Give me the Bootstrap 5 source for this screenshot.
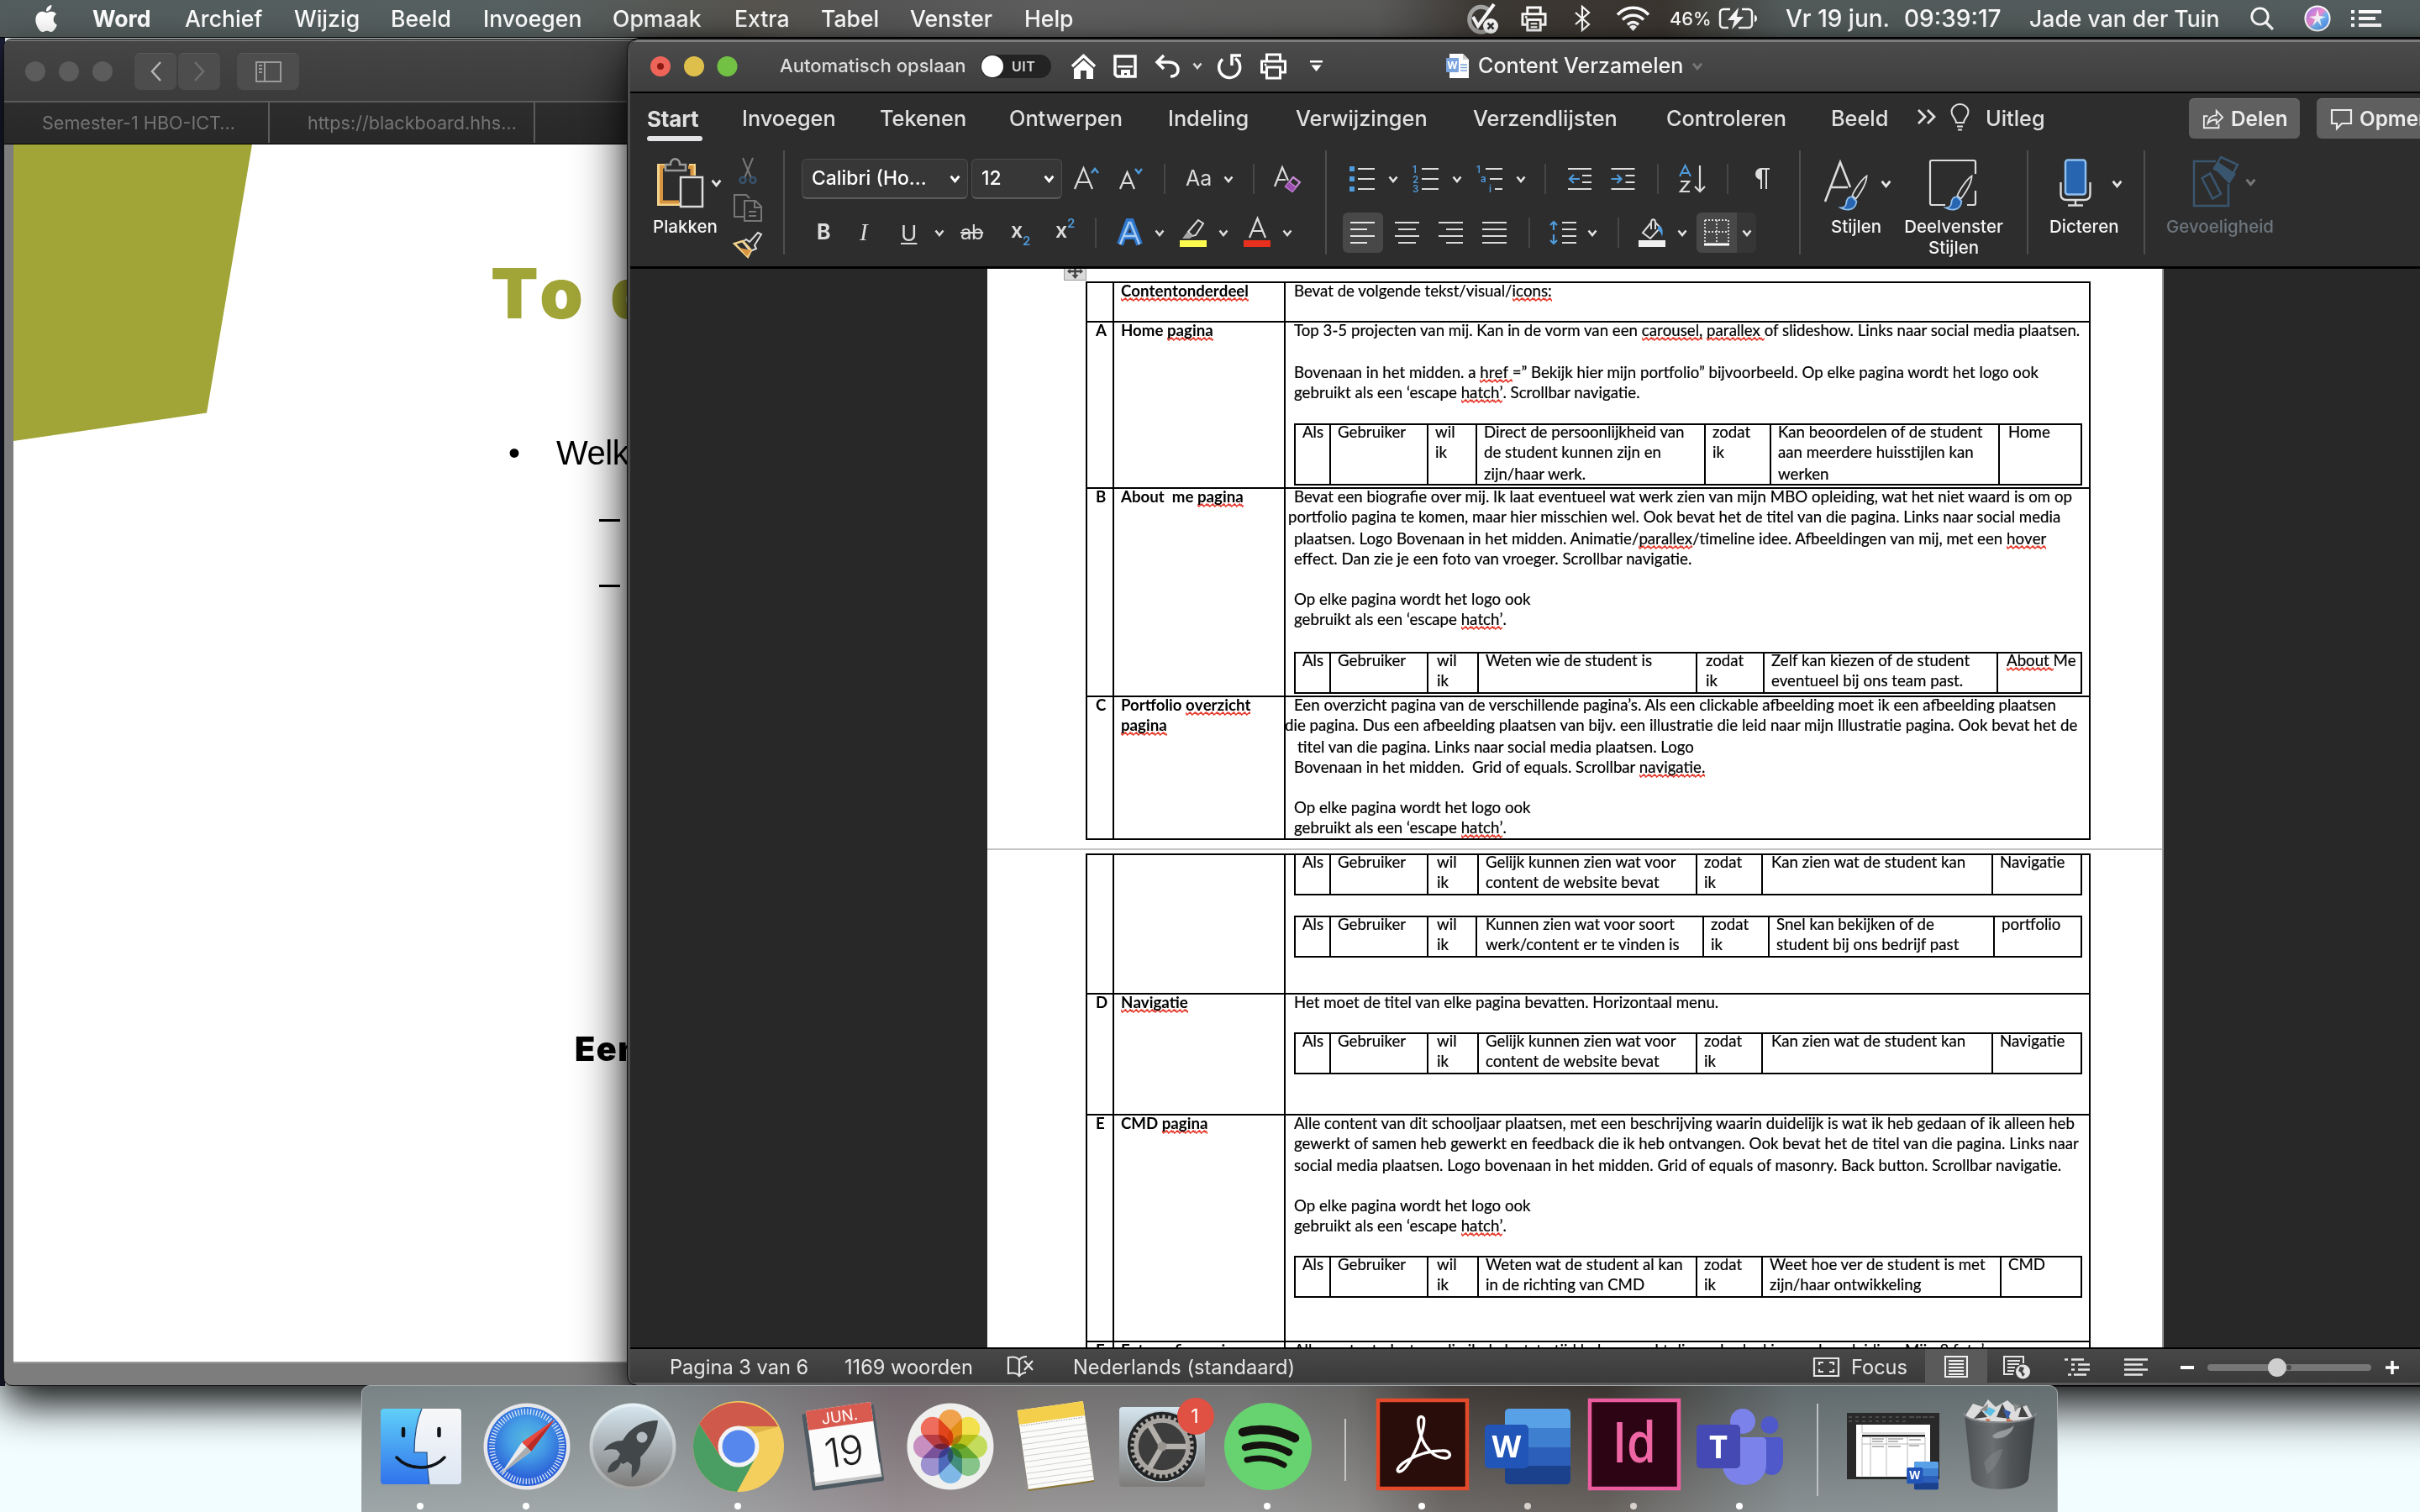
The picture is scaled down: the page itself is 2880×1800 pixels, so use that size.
<!DOCTYPE html>
<html lang="nl" data-bs-theme="dark">
<head>
<meta charset="utf-8">
<title>Content Verzamelen</title>
<link href="https://cdn.jsdelivr.net/npm/bootstrap@5.3.0/dist/css/bootstrap.min.css" rel="stylesheet">
<style>
html,body{margin:0;background:#effbfd}
body{width:2880px;height:1800px;overflow:hidden;font-family:Inter,"Liberation Sans",sans-serif;color:#e4e4e4}
svg{display:block;overflow:visible;flex:none}
.desktop{width:2880px;height:1800px;overflow:hidden;background:linear-gradient(90deg,#1b1e35 0 6px,transparent 6px) no-repeat 0 0/100% 1650px,linear-gradient(#eefafb,#f2fdff)}
.track-row{display:grid;align-items:center;justify-items:start;white-space:nowrap}

/* menu bar */
.menubar{height:45px;padding-left:42px;font-size:26.6px;font-weight:500;color:#fff;line-height:44px;border-bottom:1px solid #000;
 grid-template-columns:68px 110px 130px 115px 110px 154px 145px 103px 106px 136px 525px 66px 63px 50px 64px 58px 80px 141px 149px 263px 64px 56px auto;
 background:linear-gradient(90deg,#535c5c 0,#566060 620px,#57544f 900px,#555 1030px,#5e5e5e 1250px,#5a5a59 1640px,#3d3935 1760px,#3a352f 1980px,#525a5a 2120px,#545e5e 100%)}
.menubar .pct{font-size:21.8px}
.menubar .clock{font-size:28px}

/* browser window */
.browser{left:4px;top:46px;width:900px;height:1604px;background:#7d7d7d;border:1px solid #111;border-radius:10px;overflow:hidden;box-shadow:0 22px 50px rgba(0,0,0,.95)}
.browser-bar{height:75px;background:linear-gradient(#454545,#3b3b3b);border-top:2px solid #707070;border-bottom:2px solid #5c5c5c;padding-left:25px}
.nav-key{background:#4d4d4d;border-radius:7px;height:44px;width:50px;display:flex;align-items:center;justify-content:center;border-top:1px solid #5b5b5b}
.nav-key.wide{width:74px;margin-left:20px}
.nav-pair{margin-left:26px;gap:2px}
.browser-tabs{height:50px;background:linear-gradient(#2d2d2d,#282828);border-bottom:1px solid #000;color:#757575;font-size:21.6px}
.browser-tabs>div{border-right:2px solid #5c5c5c;width:316px;padding-left:45px;height:48px;line-height:49px;white-space:nowrap}
.slide{margin-left:11px;height:1451px;background:#fff;color:#000;width:900px;border-bottom:2px solid #9a9a9a}
.slide h1{font-weight:900;font-size:82.5px;line-height:100px;letter-spacing:8px;color:#a1a436;padding:127px 0 0 568px;margin:0;white-space:nowrap}
.slide .bullet{font:40px/50px "Liberation Sans",Arial,sans-serif;padding:115px 0 0 589px;white-space:nowrap;letter-spacing:-.5px}
.slide .bullet span:first-child{width:57px}
.slide .dash{margin:54px 0 0 697px;width:25px;height:3px;background:#000}
.slide .dash+.dash{margin-top:75px}
.slide .foot{font-weight:900;font-size:39.5px;line-height:50px;padding-left:668px;margin-top:525px;letter-spacing:1.5px;white-space:nowrap}

/* word window */
.word{left:747px;top:46px;width:2200px;height:1604px;background:#282828;border:1px solid #000;border-left:3px solid #4c4c4c;border-radius:13px;overflow:hidden;outline:1px solid #111;box-shadow:0 25px 60px rgba(0,0,0,.95),0 0 14px rgba(0,0,0,.3)}
.titlebar{height:62px;border-top:3px solid #7c7c7c;background:linear-gradient(#4b4b4b,#3e3e3e);padding:0 0 2px 24px;
 grid-template-columns:154px 239px 107px 51px 49px 45px 29px 51px 60px 162px 38px 254px auto}
.autosave{font-size:22.1px;font-weight:500;color:#dcdcdc}
.toggle{width:84px;height:28px;border-radius:14px;background:#232323;font-size:16px;font-weight:600;color:#d9d9d9;padding-left:37px;line-height:28px;letter-spacing:.5px}
.toggle i{left:1px;top:1px;width:26px;height:26px;border-radius:50%;background:#fff}
.doc-title{font-size:25.1px;font-weight:500;color:#f3f3f3}
.ribbon{height:211px;background:#2d2d2d;border-top:2px solid #000;border-bottom:3px solid #000}
.ribbon-tabs{height:61px;padding:0 0 1px 20px;font-size:25.3px;font-weight:500;color:#e0e0e0;
 grid-template-columns:113px 164px 154px 189px 152px 211px 230px 196px 102px 40px 42px 242px 152px auto}
.ribbon-tabs .tab-on{font-weight:700;position:relative;font-size:26px;letter-spacing:-.2px}
.ribbon-tabs .tab-on::after{content:"";position:absolute;left:0;width:66px;height:6px;bottom:-7px;border-radius:3px;background:#e4e4e6}
.pill{width:132px;background:#5f5f5f;border-radius:6px;height:48px;font-size:24.3px;font-weight:600;padding-left:16px;border-top:1px solid #777;color:#ececec}
.pill.wide{width:250px}
.panel-row{height:148px;padding-top:7px}
.vr-long{width:2px;height:124px;background:#4e4e4e;flex:none}
.vr-s{width:2px;height:36px;background:#474747}
.lbl{font-size:20.5px;font-weight:500;color:#f4f4f4;line-height:25px;white-space:nowrap;text-align:center;margin-top:8px}
.paste{width:98px;flex:none;padding:9px 0 0 32px}
.paste .lbl{margin:9px 0 0 -5px;text-align:left}
.clip{width:64px;flex:none;padding:9px 20px 0 0;gap:12px;margin-left:20px}
.styles-set{width:112px;flex:none;padding:10px 0 0 27px}
.styles-set .lbl{margin-left:9px;text-align:left}
.pane-set{width:140px;flex:none;padding-top:10px;margin-right:17px}
.dictate-set{width:137px;flex:none;padding:10px 0 0 25px}
.sense-set{padding:6px 0 0 25px}
.font-set{width:643px;flex:none;padding:10px 0 0 20px}
.para-set{width:562px;flex:none;padding:10px 0 0 19px}
.r1,.r2{height:48px}.r2{margin-top:16px}
.font-set .r1{grid-template-columns:202px 122px 54px 53px 26px 45px 35px 25px auto}
.font-set .r2{padding-left:18px;font-size:26px;color:#dcdcdc;grid-template-columns:51px 49px 40px 31px 60px 53px 47px 26px 45px 30px 46px 30px 46px auto}
.font-set .r2 b{font-size:25px}
.font-set .r2 i{font-family:"Liberation Serif",serif;font-size:29px}
.font-set .r2 s{font-size:24px;letter-spacing:-.5px}
.aa{font-size:25px;color:#dcdcdc}
.para-set .r1{padding-left:8px;grid-template-columns:46px 29px 47px 29px 47px 34px 28px 51px 55px 26px 57px 31px auto}
.para-set .r2{grid-template-columns:62px 52px 52px 55px 25px 45px 36px 25px 46px 23px auto}
.combo{width:198px;height:48px;background:#373737;border:1px solid #4c4c4c;border-bottom:2px solid #5c5c5c;border-radius:6px;font-size:22.9px;font-weight:500;color:#fff;padding:0 8px 0 11px}
.combo.short{width:108px}
.key-on{height:48px;width:48px;background:#484848;border-radius:6px;display:flex;align-items:center;padding-left:9px}
.key-on.split{width:71px;gap:15px;background:linear-gradient(90deg,#484848 48px,#363636 48px)}
.workspace{height:1284px}

/* document */
.sheet-wrap{width:1400px;margin-left:425px;height:1284px;background:#fff;color:#000;font:18.68px/24px Lato,Carlito,sans-serif;overflow:hidden;border-right:2px solid #999}
.sheet-a{height:692px;padding:15px 0 0 117px;border-bottom:2px solid #c4c4c4}
.sheet-b{padding:4px 0 0 117px}
.trow{display:flex;width:1196px;border-top:2px solid #000}
.grid-a,.grid-b{width:1196px}
.grid-a{border-bottom:2px solid #000}
.c1,.c2,.c3{border-left:2px solid #000;overflow:hidden;white-space:nowrap;height:100%}
.c1{width:32px;padding-left:10px;font-weight:700}
.c2{width:204px;padding-left:8px;font-weight:700}
.c3{width:960px;padding-left:10px;border-right:2px solid #000;-webkit-text-stroke:.2px #000}
.c3.open{overflow:visible}
.lines{margin:-3px 0 1px;white-space:pre}
.lines div{height:24px}
.lines .tall{height:26px}
.h0{height:47px}.h1r{height:198px}.h2r{height:248px}.h3r{height:170px}.h4r{height:166px}.h5r{height:144px}.h6r{height:270px}.h7r{height:60px}
.story{display:grid;width:938px;border:2px solid #000;border-left:0;height:50px}
.story.gap-up{margin-top:24px}
.story.tuck{margin-top:-2px}
.story.tall3{height:74px}
.story>div{border-left:2px solid #000;padding-left:8px;height:100%}
.story .lines{margin-top:-4px}
.story .in2{padding-left:10px}
.s-a{grid-template-columns:42px 116px 58px 272px 78px 272px 98px}
.s-b{grid-template-columns:42px 116px 60px 260px 80px 278px 100px}
.s-c{grid-template-columns:42px 116px 60px 260px 78px 274px 106px}
.s-d{grid-template-columns:42px 116px 58px 270px 78px 268px 104px}
.s-e{grid-template-columns:42px 116px 60px 260px 78px 284px 96px}
.sq{font-kerning:none;padding-bottom:2px;background:url("data:image/svg+xml,%3Csvg xmlns='http://www.w3.org/2000/svg' width='6.5' height='5' viewBox='0 0 6.5 5'%3E%3Cpath d='M-1 .2L1.6 4 4.9 1 7.5 4.4' fill='none' stroke='%23e53a2c' stroke-width='1.5'/%3E%3C/svg%3E") repeat-x left bottom}
.grip{left:516px;top:0;width:27px;height:14px;background:#d9d9d9;border:1px solid #999;border-top:0}
.nudge-l{margin-left:-7px}.nudge-ll{margin-left:-11px}.nudge-r{margin-left:4px}

/* status bar */
.statusbar{height:45px;border-top:2px solid #000;border-bottom:3px solid #5a5a5a;background:linear-gradient(#484848,#3a3a3a);padding-left:47px;font-size:23.6px;color:#e6e6e6;
 grid-template-columns:208px 194px 78px 881px 45px 88px 93px 73px 71px 67px 32px 212px auto}
.view-on{width:74px;height:43px;background:#5a5a5a;padding:8px 0 0 23px}
.zoomer{width:195px;height:8px;border-radius:4px;background:#777;position:relative}
.zoomer::after{content:"";position:absolute;left:72px;top:-7px;width:22px;height:22px;border-radius:50%;background:#cfcfcf}
.zoomer::before{content:"";position:absolute;left:94px;top:1px;width:6px;height:6px;border-radius:50%;background:#4a4a4a}

/* dock */
.dock{left:430px;top:1649px;width:2019px;height:165px;border:1px solid #a6adae;border-radius:10px 10px 0 0;padding:1px 0 0 7px;
 background:linear-gradient(rgba(0,0,0,.08),rgba(255,255,255,.24)),linear-gradient(90deg,#838e90 0,#899294 330px,#7d777b 570px,#7b6f74 640px,#7b7878 800px,#7a7a7a 1050px,#6f6e6d 1180px,#45403d 1290px,#3f3934 1480px,#50504e 1560px,#687275 1700px,#6d7779 100%)}
.slot{width:126px;height:150px}
.slot-rule{width:58px;height:150px}
</style>
<script src="https://cdn.jsdelivr.net/npm/bootstrap@5.3.0/dist/js/bootstrap.bundle.min.js"></script>
</head>
<body>
<svg width="0" height="0" class="position-absolute">
 <defs>
  <symbol id="chev" viewBox="0 0 12 9"><path d="M1.5 1.5L6 7l4.500-5.500" fill="none" stroke="currentColor" stroke-width="2.600"/></symbol>
  <symbol id="printer" viewBox="0 0 32 32"><g fill="none" stroke="currentColor" stroke-width="3"><path d="M8 10V2h16v8M7 23H2V10h28v13h-5"/><path d="M8 17h16v13H8z"/></g><circle cx="6.500" cy="14" r="1.500" fill="currentColor"/></symbol>
  <symbol id="brush" viewBox="0 0 46 60"><path d="M44 2c-8 5-21 24-24 33l6 5C32 32 44 14 44 2z" fill="#2d2d2d" stroke="#dcdcdc" stroke-width="2.500"/><path d="M20 37c-7-1-10 5-10 11-1 5-5 7-9 7 9 5 25 5 26-11z" fill="#2765b1" stroke="#8fc0ef" stroke-width="2.500"/></symbol>
  <symbol id="wordlogo" viewBox="0 0 102 92"><rect x="24" width="78" height="90" rx="5" fill="#2b5fba"/><path d="M24 23V5a5 5 0 0 1 5-5h68a5 5 0 0 1 5 5v18z" fill="#59a1e6"/><path d="M24 23h78v23H24z" fill="#3f7fd0"/><path d="M24 68h78v17a5 5 0 0 1-5 5H29a5 5 0 0 1-5-5z" fill="#1b418d"/><rect y="19" width="52" height="52" rx="5" fill="#2255b8"/><text x="26" y="58" font-family="Open Sans,sans-serif" font-weight="700" font-size="36" text-anchor="middle" fill="#fff">W</text></symbol>
  <linearGradient id="gFind" x2="0" y2="1"><stop stop-color="#5fcff8"/><stop offset="1" stop-color="#3173ec"/></linearGradient>
  <linearGradient id="gLite" x2="0" y2="1"><stop stop-color="#f7f7f9"/><stop offset="1" stop-color="#dde7f3"/></linearGradient>
  <radialGradient id="gSaf" cy=".4"><stop stop-color="#55b8dc"/><stop offset=".45" stop-color="#469fe6"/><stop offset="1" stop-color="#2b62d8"/></radialGradient>
  <linearGradient id="gRock" x2="0" y2="1"><stop stop-color="#d5e5ee"/><stop offset=".6" stop-color="#9fa5a8"/><stop offset="1" stop-color="#7d7b79"/></linearGradient>
  <linearGradient id="gRim" x2="0" y2="1"><stop stop-color="#e6f2f7"/><stop offset="1" stop-color="#a3a3a2"/></linearGradient>
  <linearGradient id="gTrash" x2="1" y2="0"><stop stop-color="#4c4f52"/><stop offset=".4" stop-color="#6c6f72"/><stop offset=".65" stop-color="#505356"/><stop offset="1" stop-color="#3c3f42"/></linearGradient>
  <linearGradient id="gSiri" x2="1" y2="1"><stop stop-color="#8d7cf0"/><stop offset=".45" stop-color="#f28ad0"/><stop offset=".6" stop-color="#6fb7f5"/><stop offset="1" stop-color="#4b7de8"/></linearGradient>
 </defs>
</svg>

<div class="desktop position-relative">

 <nav class="menubar track-row">
  <svg width="26" height="32" viewBox="1.300 0 13.300 16" preserveAspectRatio="none" fill="#fff"><path d="M11.182.008C11.148-.03 9.923.023 8.857 1.180c-1.066 1.156-.902 2.482-.878 2.516s1.520.087 2.475-1.258.762-2.391.728-2.430m3.314 11.733c-.048-.096-2.325-1.234-2.113-3.422s1.675-2.789 1.698-2.854-.597-.79-1.254-1.157a3.700 3.700 0 0 0-1.563-.434c-.108-.003-.483-.095-1.254.116-.508.139-1.653.589-1.968.607-.316.018-1.256-.522-2.267-.665-.647-.125-1.333.131-1.824.328-.49.196-1.422.754-2.074 2.237-.652 1.482-.311 3.830-.067 4.560s.625 1.924 1.273 2.796c.576.984 1.340 1.667 1.659 1.899s1.219.386 1.843.067c.502-.308 1.408-.485 1.766-.472.357.013 1.061.154 1.782.539.571.197 1.111.115 1.652-.105.541-.221 1.324-1.059 2.238-2.758q.52-1.185.473-1.282"/></svg>
  <span class="fw-bold">Word</span><span>Archief</span><span>Wijzig</span><span>Beeld</span><span>Invoegen</span><span>Opmaak</span><span>Extra</span><span>Tabel</span><span>Venster</span><span>Help</span>
  <svg width="40" height="38" viewBox="0 0 40 38"><path d="M28 9a14 15 0 1 0 2 20" fill="none" stroke="#a5a5a3" stroke-width="5"/><path d="M9 17l6 11L34 2" fill="none" stroke="#fff" stroke-width="4"/><circle cx="30" cy="28" r="9" fill="#fff"/><path d="M26.500 24.500l7 7m0-7l-7 7" stroke="#333" stroke-width="2.500"/></svg>
  <svg width="31" height="31" viewBox="0 0 32 32" color="#fff"><use href="#printer"/><path d="M12 22h8M12 26h8" stroke="#fff" stroke-width="2"/></svg>
  <svg width="20" height="32" viewBox="0 0 20 32"><path d="M2 9l16 14-8 7V2l8 7L2 23" fill="none" stroke="#fff" stroke-width="2.200"/></svg>
  <svg width="41" height="30" viewBox="0 0 41 30"><g fill="none" stroke="#fff" stroke-width="3.500"><path d="M2 10.500C12-.5 29-.5 39 10.500"/><path d="M8 16.500c7-7 18-7 25 0"/><path d="M14 22.500c4-4 9-4 13 0"/></g><path d="M16 25c3-3 6-3 9 0l-4.500 5z" fill="#fff"/></svg>
  <span class="pct">46%</span>
  <svg width="47" height="26" viewBox="0 0 47 26"><path d="M14 2H6a4 4 0 0 0-4 4v14a4 4 0 0 0 4 4h6M28 2h8a4 4 0 0 1 4 4v14a4 4 0 0 1-4 4H24" fill="none" stroke="#fff" stroke-width="2.500"/><path d="M24 0L11 15h8l-3 11 14-15h-8z" fill="#fff"/><path d="M43 9c4 0 4 8 0 8z" fill="#fff"/></svg>
  <span class="clock">Vr 19 jun.</span><span class="clock">09:39:17</span><span>Jade van der Tuin</span>
  <svg width="29" height="29" viewBox="0 0 29 29"><circle cx="11.500" cy="11.500" r="9.700" fill="none" stroke="#fff" stroke-width="2.800"/><path d="M18.500 18.500L27 27" stroke="#fff" stroke-width="3.200"/></svg>
  <svg width="32" height="32" viewBox="0 0 32 32"><circle cx="16" cy="16" r="14.600" fill="url(#gSiri)" stroke="#fff" stroke-width="2"/><path d="M16 5l2 8 8 1-7 3 2 9-5-7-6 6 3-8-7-3 8-1z" fill="#fff" opacity=".9"/></svg>
  <svg width="36" height="20" viewBox="0 0 36 20" fill="#fff"><path d="M0 0h4v4H0zM9 0h27v4H9zM0 8h4v4H0zM9 8h20v4H9zM0 16h4v4H0zM9 16h27v4H9z"/></svg>
 </nav>

 <section class="browser position-absolute">
  <div class="browser-bar d-flex align-items-center">
   <svg width="104" height="24" viewBox="0 0 104 24" fill="#5c5c5c"><circle cx="12" cy="12" r="12"/><circle cx="52" cy="12" r="12"/><circle cx="92" cy="12" r="12"/></svg>
   <div class="nav-pair d-flex"><div class="nav-key"><svg width="13" height="24"><path d="M12 1L2 12l10 11" fill="none" stroke="#b5b5b5" stroke-width="2.500"/></svg></div><div class="nav-key"><svg width="13" height="24"><path d="M1 1l10 11L1 23" fill="none" stroke="#6e6e6e" stroke-width="2.500"/></svg></div></div>
   <div class="nav-key wide"><svg width="31" height="25"><path d="M1 1h29v23H1zM11 1v23M4 5h4M4 9h4M4 13h4" fill="none" stroke="#9a9a9a" stroke-width="2"/></svg></div>
  </div>
  <div class="browser-tabs d-flex"><div>Semester-1 HBO-ICT…</div><div>https://blackboard.hhs…</div></div>
  <div class="slide position-relative">
   <svg class="position-absolute top-0 start-0" width="300" height="354"><path d="M0 0h284l-54 319.500L0 353z" fill="#a1a436"/></svg>
   <h1>To do</h1>
   <div class="bullet d-flex"><span>•</span><span>Welkom</span></div>
   <div class="dash"></div>
   <div class="dash"></div>
   <div class="foot">Een</div>
  </div>
 </section>

 <section class="word position-absolute">
  <header class="titlebar track-row">
   <svg width="104" height="24" viewBox="0 0 104 24"><circle cx="12" cy="12" r="12" fill="#ee6459"/><circle cx="12" cy="12" r="4" fill="#8c1a10"/><circle cx="52" cy="12" r="12" fill="#dfbf4c"/><circle cx="91.500" cy="12" r="12" fill="#72c144"/></svg>
   <span class="autosave">Automatisch opslaan</span>
   <div class="toggle position-relative"><i class="position-absolute"></i>UIT</div>
   <svg width="31" height="30" viewBox="0 0 31 30"><path d="M2 15L15.500 2.500 29 15" fill="none" stroke="#fff" stroke-width="3.500"/><path d="M4 18L15.500 7.500 27 18v12h-8V20h-7v10H4z" fill="#fff"/></svg>
   <svg width="28" height="28" viewBox="0 0 28 28"><path d="M2 2h24v24H4.500L2 23.500z" fill="none" stroke="#fff" stroke-width="3.500"/><path d="M5 13h18v2.500H5zM9 18h11v8h-4v-4h-3v4H9z" fill="#fff"/></svg>
   <svg width="31" height="28" viewBox="0 0 31 28"><path d="M11 1L3 9l8 8M3 9h14c7 0 11 4 11 9s-4 8-9 8" fill="none" stroke="#fff" stroke-width="3.500"/></svg>
   <svg width="12" height="9" color="#ddd"><use href="#chev"/></svg>
   <svg width="30" height="31" viewBox="0 0 30 31"><path d="M7 7.500A12.500 12.500 0 1 0 22 6.500M18 15V3h11" fill="none" stroke="#fff" stroke-width="3.500"/></svg>
   <svg width="33" height="32" viewBox="0 0 32 32" color="#fff"><use href="#printer"/></svg>
   <svg width="15" height="14"><path d="M0 0h15v2.500H0zM1.500 5.500h12L7.500 13z" fill="#fff"/></svg>
   <svg width="27" height="29" viewBox="0 0 27 29"><path d="M4 0h16l7 7v22H4z" fill="#fff"/><path d="M20 0l7 7h-7z" fill="#ccc"/><rect y="5" width="15" height="17" rx="1" fill="#7aa3dd"/><path d="M17 13h8M17 16.500h8M17 20h8" stroke="#7aa3dd" stroke-width="1.500"/><text x="7.500" y="18" font-size="12" font-weight="700" fill="#fff" text-anchor="middle">W</text></svg>
   <span class="doc-title">Content Verzamelen</span>
   <svg width="14" height="10" color="#777"><use href="#chev"/></svg>
  </header>

  <div class="ribbon">
   <div class="ribbon-tabs track-row">
    <span class="tab-on">Start</span><span>Invoegen</span><span>Tekenen</span><span>Ontwerpen</span><span>Indeling</span><span>Verwijzingen</span><span>Verzendlijsten</span><span>Controleren</span><span>Beeld</span>
    <svg width="24" height="18" class="mb-1"><path d="M2 1l8 8-8 8M13 1l8 8-8 8" fill="none" stroke="#e0e0e0" stroke-width="2.800"/></svg>
    <svg width="23" height="33" class="mb-1" viewBox="0 0 23 33"><path d="M7 23c0-5-5.500-7-5.500-13a10 9 0 0 1 20 0c0 6-5.500 8-5.500 13zM8 27.500h7M9 31.500h5" fill="none" stroke="#e0e0e0" stroke-width="2"/></svg>
    <span>Uitleg</span>
    <div class="pill d-flex align-items-center"><svg class="me-2" width="26" height="26" viewBox="0 0 28 26"><path d="M7 9H2v15h19v-5" fill="none" stroke="#ececec" stroke-width="2"/><path d="M7 18c1-7 5-10 11-10V2l8 8.500-8 8v-5c-5 0-8 1-11 4.500z" fill="none" stroke="#ececec" stroke-width="2"/></svg>Delen</div>
    <div class="pill wide d-flex align-items-center"><svg class="me-2" width="27" height="25" viewBox="0 0 27 25"><path d="M2 2h23v16H14l-6 6v-6H2z" fill="none" stroke="#ececec" stroke-width="2.200"/></svg>Opmerkingen</div>
   </div>
   <div class="panel-row d-flex">
    <div class="paste">
     <div class="d-flex align-items-center"><svg width="56" height="60" viewBox="0 0 56 60"><path d="M9 9H2v46h26M38 9h6v12" fill="none" stroke="#f3d28b" stroke-width="4"/><path d="M12 10.500H5v42h21M37 11h4.500v10" fill="none" stroke="#d9943f" stroke-width="4"/><path d="M10 15V8h6c0-9 11-9 11 0h7v7z" fill="#2d2d2d" stroke="#9a9a9a" stroke-width="2.500"/><path d="M28 23h26v35H28z" fill="#2d2d2d" stroke="#dcdcdc" stroke-width="2.500"/></svg><svg class="ms-2" width="13" height="10"><use href="#chev"/></svg></div>
     <div class="lbl">Plakken</div>
    </div>
    <div class="clip d-flex flex-column align-items-center">
     <svg width="22" height="31" viewBox="0 0 22 31"><path d="M5 0l10 24M17 0L7 24" stroke="#777" stroke-width="2"/><g fill="none" stroke="#37536e" stroke-width="2.500"><circle cx="5" cy="26.500" r="3.500"/><circle cx="17" cy="26.500" r="3.500"/></g></svg>
     <svg width="34" height="33" viewBox="0 0 34 33"><path d="M12 27H1V1h14l4 4M13 8h13l7 7v17H13zM25 8v8h8M18 21h9M18 26h9" fill="none" stroke="#777" stroke-width="2"/></svg>
     <svg width="34" height="31" viewBox="0 0 34 31"><path d="M15 9l4 3L29 1l4 2-8 13 2 4-7 3-9-11z" fill="none" stroke="#dcdcdc" stroke-width="2"/><path d="M11 11L1 14l16 16 4-8z" fill="none" stroke="#f3d28b" stroke-width="2.500"/><path d="M7 19l14 3-5 7z" fill="#d9943f"/></svg>
    </div>
    <div class="vr-long"></div>
    <div class="font-set">
     <div class="r1 track-row">
      <div class="combo d-flex align-items-center justify-content-between"><span>Calibri (Ho...</span><svg width="13" height="10"><use href="#chev"/></svg></div>
      <div class="combo short d-flex align-items-center justify-content-between"><span>12</span><svg width="13" height="10"><use href="#chev"/></svg></div>
      <svg width="30" height="30" viewBox="0 0 30 30"><path d="M1 27L11.500 2 22 27M5 19h13" fill="none" stroke="#dcdcdc" stroke-width="2.200"/><path d="M21 8l4-5 4 5" fill="none" stroke="#4f9bdc" stroke-width="2.500"/></svg>
      <svg width="30" height="30" viewBox="0 0 30 30"><path d="M1 27L9.500 7 18 27M4 20h11" fill="none" stroke="#dcdcdc" stroke-width="2.200"/><path d="M19 3l4 5 4-5" fill="none" stroke="#4f9bdc" stroke-width="2.500"/></svg>
      <div class="vr-s"></div>
      <span class="aa">Aa</span>
      <svg width="12" height="9"><use href="#chev"/></svg>
      <div class="vr-s"></div>
      <svg width="32" height="34" viewBox="0 0 32 34"><path d="M1 26L10 3l7 16M5 18h9" fill="none" stroke="#dcdcdc" stroke-width="2.200"/><path d="M23 15l8 6-9 11-8-6zM18 21l8 6" fill="none" stroke="#c58ad6" stroke-width="2.200"/><path d="M18 21l8 6-4 5-8-6z" fill="#9b4fb0"/></svg>
     </div>
     <div class="r2 track-row">
      <b>B</b><i>I</i>
      <span class="text-decoration-underline">U</span><svg width="12" height="9"><use href="#chev"/></svg>
      <s>ab</s>
      <svg width="24" height="34"><text y="23" font-size="25" font-weight="600" fill="#dcdcdc">x</text><text x="14" y="32" font-size="15" font-weight="600" fill="#4f9bdc">2</text></svg>
      <svg width="24" height="34"><text y="23" font-size="25" font-weight="600" fill="#dcdcdc">x</text><text x="14" y="11" font-size="15" font-weight="600" fill="#4f9bdc">2</text></svg>
      <div class="vr-s"></div>
      <svg width="31" height="32" viewBox="0 0 31 32"><path d="M4 30L14 3h3l10 27M9 20h13" fill="none" stroke="#2f78cf" stroke-width="8"/><path d="M4 30L14.500 4h2L27 30M9 20h13" fill="none" stroke="#a9cdf2" stroke-width="2.400"/></svg>
      <svg width="12" height="9"><use href="#chev"/></svg>
      <svg width="32" height="34" viewBox="0 0 32 34"><path d="M10 16L22 2l6 4-9 14-4 1z" fill="none" stroke="#dcdcdc" stroke-width="2"/><path d="M9 16l7 5-4 3H3z" fill="#a5a5a5"/><path d="M0 26h32v8H0z" fill="#fdfc4e"/></svg>
      <svg width="12" height="9"><use href="#chev"/></svg>
      <svg width="32" height="34" viewBox="0 0 32 34"><path d="M7 23L16.500 0 26 23M11 15h11" fill="none" stroke="#dcdcdc" stroke-width="2.200"/><path d="M0 26h32v8H0z" fill="#e8301f"/></svg>
      <svg width="12" height="9"><use href="#chev"/></svg>
     </div>
    </div>
    <div class="vr-long"></div>
    <div class="para-set">
     <div class="r1 track-row">
      <svg width="30" height="30" viewBox="0 0 30 30"><path d="M0 0h6v6H0zM0 12h6v6H0zM0 24h6v6H0z" fill="#4f9bdc"/><path d="M10 3h20M10 15h20M10 27h20" stroke="#dcdcdc" stroke-width="2.200"/></svg><svg width="12" height="9"><use href="#chev"/></svg>
      <svg width="31" height="32" viewBox="0 0 31 32"><g fill="#4f9bdc" font-size="11.500" font-weight="600"><text y="8.500">1</text><text y="20.500">2</text><text y="32">3</text></g><path d="M11 4h20M11 16h20M11 28h20" stroke="#dcdcdc" stroke-width="2.200"/></svg><svg width="12" height="9"><use href="#chev"/></svg>
      <svg width="31" height="32" viewBox="0 0 31 32"><g fill="#4f9bdc" font-size="11.500" font-weight="600"><text y="8.500">1</text><text x="5" y="20">a</text><text x="15" y="32">i</text></g><path d="M11 4h20M16 16h15M22 28h9" stroke="#dcdcdc" stroke-width="2.200"/></svg><svg width="12" height="9"><use href="#chev"/></svg>
      <div class="vr-s"></div>
      <svg width="28" height="28" viewBox="0 0 28 28"><path d="M0 2h28M17 10h11M17 18h11M0 26h28" stroke="#dcdcdc" stroke-width="2.200"/><path d="M14 14H2M7 9l-5 5 5 5" fill="none" stroke="#4f9bdc" stroke-width="2.200"/></svg>
      <svg width="29" height="28" viewBox="0 0 28 28"><path d="M0 2h28M17 10h11M17 18h11M0 26h28" stroke="#dcdcdc" stroke-width="2.200"/><path d="M0 14h12M7 9l5 5-5 5" fill="none" stroke="#4f9bdc" stroke-width="2.200"/></svg>
      <div class="vr-s"></div>
      <svg width="33" height="34" viewBox="0 0 33 34"><path d="M1 14L7.500 1 14 14M4 10h7" fill="none" stroke="#4f9bdc" stroke-width="2"/><path d="M2 20h10L2 32h11M25 1v31M19 26l6 6 6-6" fill="none" stroke="#dcdcdc" stroke-width="2.200"/></svg>
      <div class="vr-s"></div>
      <svg width="20" height="26" viewBox="0 0 20 26"><path d="M9 1h11M10 1v24M16 1v24" stroke="#dcdcdc" stroke-width="2"/><path d="M10 0a7 7 0 0 0 0 14z" fill="#dcdcdc"/></svg>
     </div>
     <div class="r2 track-row">
      <div class="key-on"><svg width="29" height="28"><path d="M0 2h29M0 10h20M0 18h29M0 26h20" stroke="#e6e6e6" stroke-width="2.200"/></svg></div>
      <svg width="29" height="28"><path d="M0 2h29M4 10h21M0 18h29M4 26h21" stroke="#dcdcdc" stroke-width="2.200"/></svg>
      <svg width="29" height="28"><path d="M0 2h29M9 10h20M0 18h29M9 26h20" stroke="#dcdcdc" stroke-width="2.200"/></svg>
      <svg width="29" height="28"><path d="M0 2h29M0 10h29M0 18h29M0 26h29" stroke="#dcdcdc" stroke-width="2.200"/></svg>
      <div class="vr-s"></div>
      <svg width="32" height="30" viewBox="0 0 32 30"><path d="M15 3h17M15 11h17M15 19h17M15 27h17" stroke="#dcdcdc" stroke-width="2.200"/><path d="M5 12V2M1 6l4-4 4 4M5 17v11M1 24l4 4 4-4" fill="none" stroke="#4f9bdc" stroke-width="2.200"/></svg><svg width="12" height="9"><use href="#chev"/></svg>
      <div class="vr-s"></div>
      <svg width="32" height="34" viewBox="0 0 32 34"><path d="M15 13V5c0-5 5-5 5 0v8M15 5L5 17l9 7 12-13-6-6" fill="none" stroke="#dcdcdc" stroke-width="2"/><path d="M23 9c5 0 7 5 5 13-1-5-3-7-5-8z" fill="#4f9bdc"/><path d="M0 26h32v8H0z" fill="#f0f0f0"/></svg><svg width="12" height="9"><use href="#chev"/></svg>
      <div class="key-on split"><svg width="30" height="32" viewBox="0 0 30 32"><path d="M1 1h28M1 1v26M29 1v26M15 1v26M1 15h28" fill="none" stroke="#dcdcdc" stroke-width="1.800" stroke-dasharray="2 2"/><path d="M0 30h30" stroke="#fff" stroke-width="3"/></svg><svg width="12" height="9"><use href="#chev"/></svg></div>
     </div>
    </div>
    <div class="vr-long"></div>
    <div class="styles-set">
     <div class="d-flex align-items-center"><svg width="60" height="60" viewBox="0 0 60 60"><path d="M2 51L20 4l12 30M9 34h20" fill="none" stroke="#dcdcdc" stroke-width="2.600"/><svg x="13" y="19" width="47" height="43"><use href="#brush"/></svg></svg><svg class="ms-2" width="13" height="10"><use href="#chev"/></svg></div>
     <div class="lbl">Stijlen</div>
    </div>
    <div class="pane-set d-flex flex-column align-items-center">
     <svg width="60" height="60" viewBox="0 0 60 60"><path d="M20 55H4a2 2 0 0 1-2-2V4a2 2 0 0 1 2-2h50a2 2 0 0 1 2 2v14M56 38v15a2 2 0 0 1-2 2h-8" fill="none" stroke="#dcdcdc" stroke-width="2.200"/><svg x="13" y="19" width="47" height="43"><use href="#brush"/></svg></svg>
     <div class="lbl">Deelvenster<br>Stijlen</div>
    </div>
    <div class="vr-long"></div>
    <div class="dictate-set">
     <div class="d-flex align-items-center gap-4 ms-2 ps-1"><svg width="38" height="60" viewBox="0 0 38 60"><rect x="7" y="1.500" width="24" height="41" rx="3" fill="#2765b1" stroke="#8fc0ef" stroke-width="2.500"/><path d="M1.500 28v14q0 7 7 7h21q7 0 7-7V28M19 49v6M10 55.500h18" fill="none" stroke="#dcdcdc" stroke-width="2.400"/></svg><svg width="13" height="10"><use href="#chev"/></svg></div>
     <div class="lbl text-start">Dicteren</div>
    </div>
    <div class="vr-long"></div>
    <div class="sense-set">
     <div class="d-flex align-items-center gap-2 ms-4 ps-2" style="color:#777"><svg width="54" height="64" viewBox="0 0 54 64"><path d="M27 7H1v53h41V34" fill="none" stroke="#3a566f" stroke-width="2.500"/><path d="M8 32l7-9 21 18-7 9z" fill="none" stroke="#3a566f" stroke-width="2.500" transform="rotate(22 22 36)"/><path d="M24 14l6-6 21 14-8 12z" fill="#3a566f"/><path d="M33 2l20 9-8 15-20-10z" fill="none" stroke="#3a566f" stroke-width="2.500"/></svg><svg width="13" height="10"><use href="#chev"/></svg></div>
     <div class="lbl text-secondary">Gevoeligheid</div>
    </div>
   </div>
  </div>

  <main class="workspace position-relative">
   <div class="sheet-wrap">
    <div class="sheet-a">
     <div class="grid-a">
      <div class="trow h0"><div class="c1"></div><div class="c2"><div class="lines"><div><span class="sq">Contentonderdeel</span></div></div></div><div class="c3"><div class="lines"><div>Bevat de volgende tekst/visual/<span class="sq">icons:</span></div></div></div></div>
      <div class="trow h1r"><div class="c1"><div class="lines">A</div></div><div class="c2"><div class="lines"><div>Home <span class="sq">pagina</span></div></div></div><div class="c3"><div class="lines"><div>Top 3-5 projecten van mij. Kan in de vorm van een <span class="sq">carousel,</span> <span class="sq">parallex </span>of slideshow. Links naar social media plaatsen.</div><div class="tall"></div><div>Bovenaan in het midden. a <span class="sq">href </span>=” Bekijk hier mijn portfolio” bijvoorbeeld. Op elke pagina wordt het logo ook</div><div>gebruikt als een ‘escape <span class="sq">hatch’</span>. Scrollbar navigatie.</div><div></div></div>
       <div class="story tall3 s-a"><div><div class="lines">Als</div></div><div><div class="lines">Gebruiker</div></div><div><div class="lines">wil<br>ik</div></div><div><div class="lines"><div>Direct de persoonlijkheid van</div><div class="tall">de student kunnen zijn en</div><div>zijn/haar werk.</div></div></div><div><div class="lines">zodat<br>ik</div></div><div><div class="lines"><div>Kan beoordelen of de student</div><div class="tall">aan meerdere huisstijlen kan</div><div>werken</div></div></div><div class="in2"><div class="lines">Home</div></div></div></div></div>
      <div class="trow h2r"><div class="c1"><div class="lines">B</div></div><div class="c2"><div class="lines"><div>About  me <span class="sq">pagina</span></div></div></div><div class="c3"><div class="lines"><div>Bevat een biografie over mij. Ik laat eventueel wat werk zien van mijn MBO opleiding, wat het niet waard is om op</div><div class="tall nudge-l">portfolio pagina te komen, maar hier misschien wel. Ook bevat het de titel van die pagina. Links naar social media</div><div>plaatsen. Logo Bovenaan in het midden. Animatie/<span class="sq">parallex</span>/timeline idee. Afbeeldingen van mij, met een <span class="sq">hover</span></div><div>effect. Dan zie je een foto van vroeger. Scrollbar navigatie.</div><div></div><div>Op elke pagina wordt het logo ook</div><div class="tall">gebruikt als een ‘escape <span class="sq">hatch’</span>.</div><div></div></div>
       <div class="story s-b"><div><div class="lines">Als</div></div><div><div class="lines">Gebruiker</div></div><div class="in2"><div class="lines">wil<br>ik</div></div><div><div class="lines">Weten wie de student is</div></div><div class="in2"><div class="lines">zodat<br>ik</div></div><div><div class="lines">Zelf kan kiezen of de student<br>eventueel bij ons team past.</div></div><div class="in2"><div class="lines"><div><span class="sq">About </span>Me</div></div></div></div></div></div>
      <div class="trow h3r"><div class="c1"><div class="lines">C</div></div><div class="c2"><div class="lines"><div>Portfolio <span class="sq">overzicht</span></div><div><span class="sq">pagina</span></div></div></div><div class="c3"><div class="lines"><div>Een overzicht pagina van de verschillende pagina’s. Als een clickable afbeelding moet ik een afbeelding plaatsen</div><div class="tall nudge-ll">die pagina. Dus een afbeelding plaatsen van bijv. een illustratie die leid naar mijn Illustratie pagina. Ook bevat het de</div><div class="nudge-r">titel van die pagina. Links naar social media plaatsen. Logo</div><div>Bovenaan in het midden.  Grid of equals. Scrollbar <span class="sq">navigatie.</span></div><div></div><div>Op elke pagina wordt het logo ook</div><div>gebruikt als een ‘escape <span class="sq">hatch’</span>.</div></div></div></div>
     </div>
    </div>
    <div class="sheet-b">
     <div class="grid-b">
      <div class="trow h4r"><div class="c1"></div><div class="c2"></div><div class="c3 open">
       <div class="story tuck s-c"><div><div class="lines">Als</div></div><div><div class="lines">Gebruiker</div></div><div class="in2"><div class="lines">wil<br>ik</div></div><div><div class="lines">Gelijk kunnen zien wat voor<br>content de website bevat</div></div><div><div class="lines">zodat<br>ik</div></div><div class="in2"><div class="lines">Kan zien wat de student kan</div></div><div><div class="lines">Navigatie</div></div></div>
       <div class="story gap-up s-d"><div><div class="lines">Als</div></div><div><div class="lines">Gebruiker</div></div><div class="in2"><div class="lines">wil<br>ik</div></div><div class="in2"><div class="lines">Kunnen zien wat voor soort<br>werk/content er te vinden is</div></div><div><div class="lines">zodat<br>ik</div></div><div><div class="lines">Snel kan bekijken of de<br>student bij ons bedrijf past</div></div><div><div class="lines">portfolio</div></div></div></div></div>
      <div class="trow h5r"><div class="c1"><div class="lines">D</div></div><div class="c2"><div class="lines"><div><span class="sq">Navigatie</span></div></div></div><div class="c3"><div class="lines"><div>Het moet de titel van elke pagina bevatten. Horizontaal menu.</div></div>
       <div class="story gap-up s-c"><div><div class="lines">Als</div></div><div><div class="lines">Gebruiker</div></div><div class="in2"><div class="lines">wil<br>ik</div></div><div><div class="lines">Gelijk kunnen zien wat voor<br>content de website bevat</div></div><div><div class="lines">zodat<br>ik</div></div><div class="in2"><div class="lines">Kan zien wat de student kan</div></div><div><div class="lines">Navigatie</div></div></div></div></div>
      <div class="trow h6r"><div class="c1"><div class="lines">E</div></div><div class="c2"><div class="lines"><div>CMD <span class="sq">pagina</span></div></div></div><div class="c3"><div class="lines"><div>Alle content van dit schooljaar plaatsen, met een beschrijving waarin duidelijk is wat ik heb gedaan of ik alleen heb</div><div class="tall">gewerkt of samen heb gewerkt en feedback die ik heb ontvangen. Ook bevat het de titel van die pagina. Links naar</div><div>social media plaatsen. Logo bovenaan in het midden. Grid of equals of masonry. Back button. Scrollbar navigatie.</div><div></div><div>Op elke pagina wordt het logo ook</div><div>gebruikt als een ‘escape <span class="sq">hatch’</span>.</div></div>
       <div class="story gap-up s-e"><div><div class="lines">Als</div></div><div><div class="lines">Gebruiker</div></div><div class="in2"><div class="lines">wil<br>ik</div></div><div><div class="lines">Weten wat de student al kan<br>in de richting van CMD</div></div><div><div class="lines">zodat<br>ik</div></div><div><div class="lines">Weet hoe ver de student is met<br>zijn/haar ontwikkeling</div></div><div><div class="lines">CMD</div></div></div></div></div>
      <div class="trow h7r"><div class="c1"><div class="lines">F</div></div><div class="c2"><div class="lines"><div>Fotografie pagina</div></div></div><div class="c3"><div class="lines"><div>Alle content plaatsen die ik de laatste tijd heb gemaakt die onderdeel is van de opleiding. Mijn 8 foto’s</div></div></div></div>
     </div>
    </div>
   </div>
   <div class="grip position-absolute"><svg width="25" height="12"><path d="M12.500 0v9M4 3h17" stroke="#444" stroke-width="2.500"/><path d="M8.500 7h8l-4 5zM3 3l4-3v6zM22 3l-4-3v6z" fill="#444"/></svg></div>
  </main>

  <footer class="statusbar track-row">
   <span>Pagina 3 van 6</span><span>1169 woorden</span>
   <svg width="32" height="27" viewBox="0 0 32 27"><path d="M14 5C11 1 6 1 1 2v19c5-1 10-1 13 3 2-2 4-4 8-4M14 5v20M14 5c2-3 5-4 9-4M20 6l10 11M30 6L20 17" fill="none" stroke="#e6e6e6" stroke-width="2.200"/></svg>
   <span>Nederlands (standaard)</span>
   <svg width="31" height="23" viewBox="0 0 31 23"><path d="M1 1h29v21H1zM7 9V6h5M19 6h5v3M7 14v3h5M19 17h5v-3" fill="none" stroke="#e6e6e6" stroke-width="2.200"/></svg>
   <span>Focus</span>
   <div class="view-on"><svg width="28" height="26"><path d="M1 1h26v24H1zM5 6h18M5 10h18M5 14h18M5 18h18M5 22h18" fill="none" stroke="#f0f0f0" stroke-width="2"/></svg></div>
   <svg width="33" height="28" viewBox="0 0 33 28"><path d="M12 22H1V1h23v8M5 6h15M5 10h14M5 14h9M5 18h8" fill="none" stroke="#e6e6e6" stroke-width="2"/><circle cx="23.500" cy="19" r="8.500" fill="#e6e6e6"/><path d="M20 13l5 1-2 5 3 3-3 3-2-5-3-2z" fill="#444"/></svg>
   <svg width="30" height="21" viewBox="0 0 30 21"><path d="M0 1.500h4M8 1.500h15M8 7.500h4M16 7.500h14M8 13.500h4M16 13.500h14M4 19.500h4M11 19.500h15" stroke="#e6e6e6" stroke-width="2.300"/></svg>
   <svg width="28" height="21" viewBox="0 0 28 21"><path d="M0 1.500h28M0 7.500h22M0 13.500h28M0 19.500h22" stroke="#e6e6e6" stroke-width="2.300"/></svg>
   <svg width="16" height="4"><path d="M0 2h16" stroke="#fff" stroke-width="4"/></svg>
   <div class="zoomer"></div>
   <svg width="16" height="16"><path d="M0 8h16M8 0v16" stroke="#fff" stroke-width="3.500"/></svg>
  </footer>
 </section>

 <div class="dock position-absolute d-flex">
  <svg class="slot" viewBox="0 0 126 150"><rect x="15" y="26" width="96" height="90" rx="4" fill="url(#gFind)"/><path d="M64 26h43a4 4 0 0 1 4 4v82a4 4 0 0 1-4 4H73c-2-12-3-24-3-38H55c0-20 2-36 9-52z" fill="url(#gLite)"/><path d="M64 26c-7 16-9 32-9 52h15c0 14 1 26 3 38" fill="none" stroke="#234a7c" stroke-width="1.200"/><path d="M42 50v8M84.500 50v8" stroke="#101418" stroke-width="4.500" stroke-linecap="round"/><path d="M34 84c15 16 42 16 57 0" fill="none" stroke="#101418" stroke-width="3.500" stroke-linecap="round"/><circle cx="62" cy="142" r="4" fill="#fff"/></svg>
  <svg class="slot" viewBox="0 0 126 150"><circle cx="63" cy="71" r="51.500" fill="#e7e7e9"/><circle cx="63" cy="71" r="47" fill="url(#gSaf)"/><circle cx="63" cy="71" r="41.500" fill="none" stroke="#dbe9f7" stroke-width="7" stroke-dasharray="1.300 2.322"/><path d="M96 39L57 66l11 11z" fill="#e8493f"/><path d="M96 39L62.500 71.500 68 77z" fill="#b92b25"/><path d="M32 104l25-38 11 11z" fill="#ececec"/><path d="M32 104l30.500-32.500L68 77z" fill="#a9adb0"/><circle cx="62" cy="142" r="4" fill="#fff"/></svg>
  <svg class="slot" viewBox="0 0 126 150"><circle cx="63" cy="71" r="51.500" fill="url(#gRim)"/><circle cx="63" cy="71" r="47.500" fill="url(#gRock)"/><path d="M93 40c-20 0-34 10-42 24-9 0-17 3-23 12 6-2 12-2 16-1l4 5-3 6 6 6 6-3 5 4c0 6-1 11 0 15 8-6 11-13 10-24 11-11 19-24 21-44z" fill="#42474a"/><circle cx="74" cy="60" r="6.500" fill="#b3bcc1"/><path d="M46 86c-8 3-12 8-13 16 8 0 13-4 16-12z" fill="#42474a"/></svg>
  <svg class="slot" viewBox="0 0 126 150"><circle cx="63" cy="71" r="54" fill="#f5cf5e"/><path d="M16.200 44A54 54 0 0 1 109.800 47H63L42 84z" fill="#cf5a4c"/><path d="M16.200 44A54 54 0 0 0 61 125L84 83 42 84z" fill="#4a9d63"/><path d="M63 47h49L80 56z" fill="#d6a93f" opacity=".7"/><circle cx="63" cy="71" r="24.500" fill="#f4f4f4"/><circle cx="63" cy="71" r="19.500" fill="#5687ec"/><circle cx="62" cy="142" r="4" fill="#fff"/></svg>
  <svg class="slot" viewBox="0 0 126 150"><g transform="rotate(-8 62 70)"><rect x="18" y="26" width="86" height="92" rx="2" fill="#4e5a62"/><rect x="22" y="96" width="80" height="17" fill="#c9c9c7"/><rect x="23" y="23" width="78" height="86" fill="#fbfbfb"/><path d="M23 23h78v23H23z" fill="#d95b50"/><text x="62" y="41.500" font-size="18.500" fill="#fff" text-anchor="middle">JUN.</text><text x="61" y="94" font-size="48" font-weight="300" fill="#1f1f1f" text-anchor="middle" letter-spacing="-1">19</text></g></svg>
  <svg class="slot" viewBox="0 0 126 150"><circle cx="63" cy="71" r="51.500" fill="#efefee"/><g style="isolation:isolate"><g style="mix-blend-mode:multiply"><rect x="49" y="27" width="28" height="43" rx="14" fill="#f0a24c"/></g><g style="mix-blend-mode:multiply"><rect x="49" y="27" width="28" height="43" rx="14" fill="#f2e14d" transform="rotate(45 63 71)"/></g><g style="mix-blend-mode:multiply"><rect x="49" y="27" width="28" height="43" rx="14" fill="#c3dc5c" transform="rotate(90 63 71)"/></g><g style="mix-blend-mode:multiply"><rect x="49" y="27" width="28" height="43" rx="14" fill="#86c489" transform="rotate(135 63 71)"/></g><g style="mix-blend-mode:multiply"><rect x="49" y="27" width="28" height="43" rx="14" fill="#7fb8e6" transform="rotate(180 63 71)"/></g><g style="mix-blend-mode:multiply"><rect x="49" y="27" width="28" height="43" rx="14" fill="#9d92cf" transform="rotate(225 63 71)"/></g><g style="mix-blend-mode:multiply"><rect x="49" y="27" width="28" height="43" rx="14" fill="#c68fc0" transform="rotate(270 63 71)"/></g><g style="mix-blend-mode:multiply"><rect x="49" y="27" width="28" height="43" rx="14" fill="#ee6d5c" transform="rotate(315 63 71)"/></g></g></svg>
  <svg class="slot" viewBox="0 0 126 150"><g transform="rotate(-8 63 71)"><rect x="23" y="22" width="79" height="97" fill="#8a7433"/><rect x="23" y="22" width="79" height="95" fill="#fbfbfa"/><path d="M23 22h79v17H23z" fill="#f3cf4c"/><path d="M25 41h75" stroke="#999" stroke-width="1" stroke-dasharray="1.500 1.500"/><path d="M23 49h79M23 56h79M23 63h79M23 70h79M23 77h79M23 84h79M23 91h79M23 98h79M23 105h79M23 112h79" stroke="#cfcfcf" stroke-width="1"/></g></svg>
  <svg class="slot" viewBox="0 0 126 150"><rect x="12" y="24" width="102" height="95" rx="4" fill="url(#gRock)"/><circle cx="63" cy="71" r="42" fill="#232425" stroke="#b9c6ce" stroke-width="1.500"/><circle cx="63" cy="71" r="31" fill="#3d3d3d" stroke="#a9a5a1" stroke-width="5.500"/><circle cx="63" cy="71" r="35" fill="none" stroke="#a9a5a1" stroke-width="5.500" stroke-dasharray="3.200 3.672"/><path d="M63 71h29M63 71L48.500 46M63 71L48.500 96" stroke="#b3afab" stroke-width="6.500"/><circle cx="63" cy="71" r="5.500" fill="#98948f"/><circle cx="103" cy="35" r="22" fill="#e05043"/><text x="102" y="43" font-size="23" fill="#fff" text-anchor="middle">1</text></svg>
  <svg class="slot" viewBox="0 0 126 150"><circle cx="63" cy="71" r="52" fill="#67d370"/><g fill="none" stroke="#15130f" stroke-linecap="round"><path d="M33 54c20-6 43-3 62 7" stroke-width="10.500"/><path d="M36 72c17-5 36-3 52 6" stroke-width="8.500"/><path d="M38 87c15-4 30-2 44 6" stroke-width="7"/></g><circle cx="62" cy="142" r="4" fill="#fff"/></svg>
  <svg class="slot-rule" viewBox="0 0 58 150"><path d="M29 38v74" stroke="#c6c6c6" stroke-width="2"/></svg>
  <svg class="slot" viewBox="0 0 126 150"><rect x="10" y="16" width="106" height="105" fill="#290d0a" stroke="#e24a2a" stroke-width="4.500"/><path d="M63 36c-7-3-6 10-2 22 4 13 15 27 29 27 9-1 6-10-4-9-14 0-30 5-42 12-10 6-13 12-9 13 6 0 14-13 21-28 5-12 12-34 7-37z" fill="none" stroke="#fff" stroke-width="3.500"/><circle cx="62" cy="142" r="4" fill="#fff"/></svg>
  <svg class="slot" viewBox="0 0 126 150"><svg x="11" y="26" width="102" height="92"><use href="#wordlogo"/></svg><circle cx="62" cy="142" r="4" fill="#d8d0cb"/></svg>
  <svg class="slot" viewBox="0 0 126 150"><rect x="10" y="16" width="106" height="105" fill="#2d0413" stroke="#ea5c9e" stroke-width="4.500"/><text x="63" y="90" font-family="Open Sans,sans-serif" font-size="67" font-weight="600" fill="#ee66a4" text-anchor="middle" textLength="52" lengthAdjust="spacingAndGlyphs">Id</text><circle cx="62" cy="142" r="4" fill="#d8d0cb"/></svg>
  <svg class="slot" viewBox="0 0 126 150"><circle cx="98" cy="45.500" r="10.500" fill="#5059c9"/><path d="M87 60h22a5 5 0 0 1 5 5v22c0 24-27 24-27 0z" fill="#5059c9"/><circle cx="66" cy="41" r="15" fill="#7b83eb"/><path d="M42 60h47a5 5 0 0 1 5 5v27c0 33-52 33-52 0z" fill="#7b83eb"/><rect x="11" y="45" width="52" height="52" rx="5" fill="#4549b4"/><text x="37" y="85" font-family="Open Sans,sans-serif" font-size="38" font-weight="700" fill="#fff" text-anchor="middle">T</text><circle cx="62" cy="142" r="4" fill="#fff"/></svg>
  <svg class="slot-rule" viewBox="0 0 58 150"><path d="M29 20v110" stroke="#bcc2c3" stroke-width="2"/></svg>
  <svg class="slot" viewBox="0 0 126 150"><rect x="6" y="31" width="110" height="79" fill="#292929"/><path d="M8 36h100M8 41h70M82 36h30" stroke="#555" stroke-width="1.500" stroke-dasharray="4 4"/><path d="M17 45h88v62H17z" fill="#fff"/><path d="M24 57h75v2.500H24z" fill="#222"/><path d="M24 45v10M24 55h75M24 60v46M34 60v46M53 60v46M78 60v46M99 60v46M24 68h75" stroke="#bbb" stroke-width="1"/><path d="M36 62h14M36 65h13M36 71h14M55 62h18M55 65h12M55 71h15M80 63h14M80 70h12" stroke="#777" stroke-width="1"/><svg x="77" y="89" width="38" height="34"><use href="#wordlogo"/></svg></svg>
  <svg class="slot" viewBox="0 0 126 150"><path d="M21 34l9-14 12 4 6-9 9 9 14-8 11 10 12-4 8 16-12 8H33z" fill="#dcdcdc"/><path d="M31 38l9-10 7 8zM58 36l7-16 9 18zM84 36l4-14 8 14z" fill="#444"/><path d="M43 30l6-6 8 4-6 7z" fill="#5cbfe3"/><path d="M66 26l9 4-4 10z" fill="#3a5fa8"/><path d="M70 38l8 2-8 4zM45 38l6 1-4 4z" fill="#d0653a"/><path d="M48 20l-10 8 9 1zM78 20l8 2-6 8z" fill="#8a8a8a"/><path d="M20 33c10 13 74 13 84 0l-8 76c-3 17-65 17-68 0z" fill="url(#gTrash)" opacity=".97"/><path d="M19 31c0 15 86 15 86 0" fill="none" stroke="#85888a" stroke-width="2"/><path d="M53 58c10-8 22-6 26-13-2 12-14 18-24 16z" fill="#a5a8aa" opacity=".8"/><path d="M43 90c8-10 14-14 22-16-2 12-8 22-18 30z" fill="#8d9093" opacity=".4"/></svg>
 </div>
</div>
</body>
</html>
